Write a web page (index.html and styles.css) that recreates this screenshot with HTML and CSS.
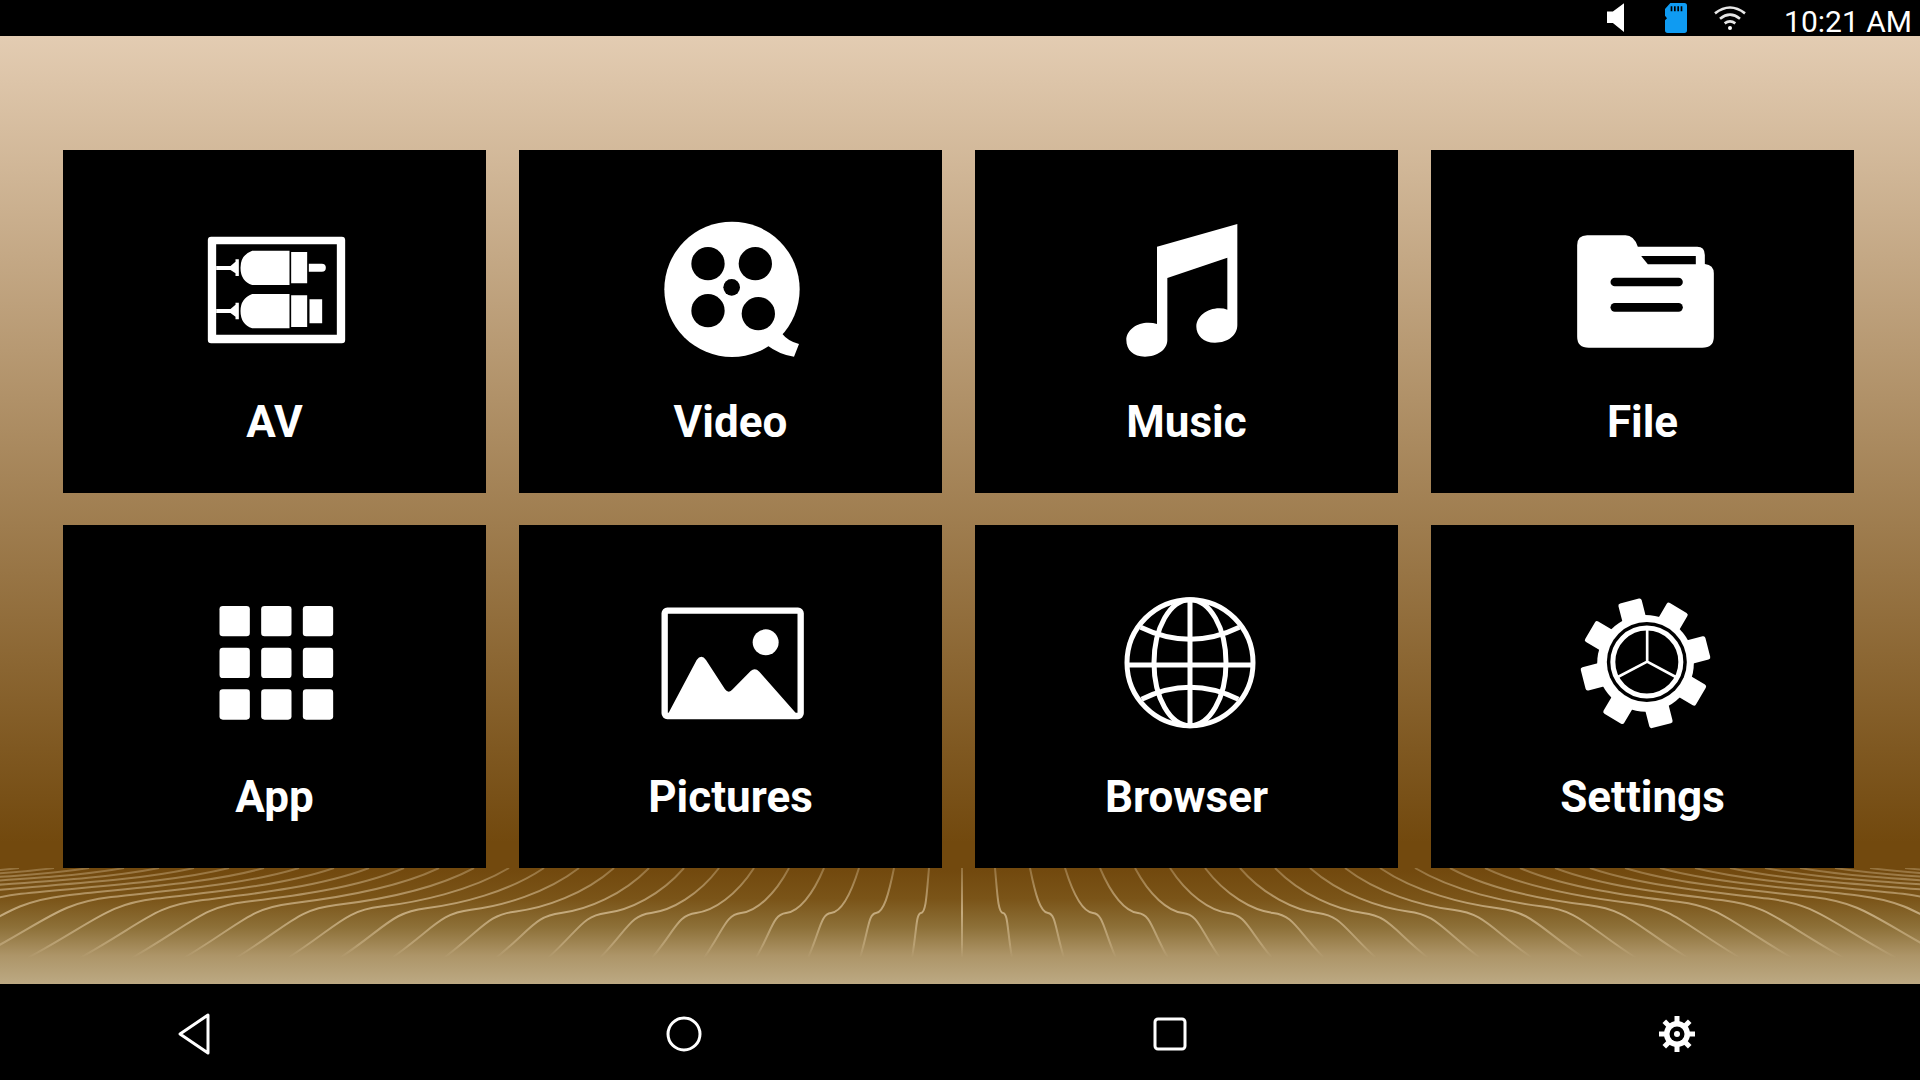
FILE: index.html
```html
<!DOCTYPE html>
<html>
<head>
    <title>Home</title>
    <link rel="stylesheet" href="styles.css">
</head>
<body>
    <div class="screen">
        <div class="statusbar">
            <svg class="st-speaker" viewBox="140 10 52 90"><path d="M140 35H158L192 10V98L158 70H140Z"/></svg>
            <svg class="st-sd" viewBox="314 10 66 90">
                <path class="sd-body" d="M330 10H372Q380 10 380 18V92Q380 100 372 100H322Q314 100 314 92V62L320 56L314 48V28Z"/>
                <path d="M331 20h5v15h-5zM341 20h5v15h-5zM351 20h5v15h-5zM361 20h5v15h-5z"/>
            </svg>
            <svg class="st-wifi" viewBox="460 18 100 72">
                <g class="wifi-arcs">
                    <path d="M465 40Q510 5 555 40"/>
                    <path d="M480 56Q510 32 540 56"/>
                    <path d="M494 70Q510 58 526 70"/>
                </g>
                <circle cx="510" cy="84" r="6"/>
            </svg>
            <span class="clock">10:21 AM</span>
        </div>

        <div class="desktop">
            <svg id="waves" class="waves" viewBox="0 0 1920 116">
                <defs>
                    <linearGradient id="waveFade" gradientUnits="userSpaceOnUse" x1="0" y1="0" x2="0" y2="90">
                        <stop offset="0" stop-color="#e8d2ac" stop-opacity="0.3"/>
                        <stop offset="0.5" stop-color="#e8d2ac" stop-opacity="0.65"/>
                        <stop offset="0.85" stop-color="#e8d2ac" stop-opacity="0.35"/>
                        <stop offset="1" stop-color="#e8d2ac" stop-opacity="0"/>
                    </linearGradient>
                </defs>
            </svg>

            <div class="grid">
                <div class="card">
                    <svg class="icon" viewBox="43.5 30 480 450">
                        <path fill-rule="evenodd" d="M92 110H484Q494 110 494 120V420Q494 430 484 430H92Q82 430 82 420V120Q82 110 92 110ZM107 133V404H469V133Z"/>
                        <path d="M107 198H150L165 185V220L150 210H107ZM165 178H175V228H165ZM327 152H215Q180 165 180 203Q180 243 215 255H327ZM332 156H380V250H332ZM385 191H424Q436 191 436 203Q436 215 424 215H385Z"/>
                        <path d="M107 327H150L165 314V350L150 339H107ZM165 308H175V358H165ZM327 282H215Q180 295 180 333Q180 373 215 385H327ZM332 286H380V381H332ZM387 298H425V370H387Z"/>
                    </svg>
                    <div class="label">AV</div>
                </div>
                <div class="card">
                    <svg class="icon" viewBox="33 30 480 450">
                        <path d="M380 435Q420 465 462 470L477 432Q445 425 425 400Z"/>
                        <circle cx="276" cy="268" r="203"/>
                        <g class="cut">
                            <circle cx="204" cy="191" r="50"/>
                            <circle cx="346" cy="191" r="50"/>
                            <circle cx="204" cy="332" r="50"/>
                            <circle cx="355" cy="341" r="50"/>
                            <circle cx="275" cy="262" r="25"/>
                        </g>
                    </svg>
                    <div class="label">Video</div>
                </div>
                <div class="card">
                    <svg class="icon" viewBox="21 30 480 450">
                        <path d="M171 140L412 72V375C412 405 385 428 345 428C310 428 289 405 289 380C289 350 320 325 358 325Q372 325 382 329V173L202 234V420C202 450 170 470 135 470C100 470 79 450 79 420C79 390 110 368 145 368Q160 368 171 372Z"/>
                    </svg>
                    <div class="label">Music</div>
                </div>
                <div class="card">
                    <svg class="icon" viewBox="37.5 0 480 450">
                        <path d="M110 76H225Q250 76 262 110H440Q463 110 463 135V162Q490 165 490 190V380Q490 413 455 413H115Q80 413 80 380V106Q80 76 110 76Z"/>
                        <g class="cut">
                            <path d="M272 138H436V163H292Z"/>
                            <rect x="180" y="203" width="217" height="26" rx="13"/>
                            <rect x="180" y="279" width="217" height="26" rx="13"/>
                        </g>
                    </svg>
                    <div class="label">File</div>
                </div>
                <div class="card">
                    <svg class="icon" viewBox="13.5 -15 480 450">
                        <rect x="87" y="48" width="91" height="91" rx="10"/>
                        <rect x="212" y="48" width="91" height="91" rx="10"/>
                        <rect x="337" y="48" width="91" height="91" rx="10"/>
                        <rect x="87" y="173" width="91" height="91" rx="10"/>
                        <rect x="212" y="173" width="91" height="91" rx="10"/>
                        <rect x="337" y="173" width="91" height="91" rx="10"/>
                        <rect x="87" y="298" width="91" height="91" rx="10"/>
                        <rect x="212" y="298" width="91" height="91" rx="10"/>
                        <rect x="337" y="298" width="91" height="91" rx="10"/>
                    </svg>
                    <div class="label">App</div>
                </div>
                <div class="card">
                    <svg class="icon" viewBox="33 -15 480 450">
                        <rect class="line" x="74" y="62" width="408" height="316" rx="8" stroke-width="19"/>
                        <circle cx="377" cy="157" r="39"/>
                        <path d="M84 372L170 210Q184 190 198 210L255 298Q266 312 278 298L332 243Q345 232 358 245L470 372Z"/>
                    </svg>
                    <div class="label">Pictures</div>
                </div>
                <div class="card">
                    <svg class="icon" viewBox="21 15 480 450">
                        <g class="line" stroke-width="15">
                            <circle cx="270" cy="248" r="189"/>
                            <ellipse cx="270" cy="248" rx="108" ry="189"/>
                            <path d="M270 60V436M82 255H458"/>
                            <path d="M122 142Q270 214 418 142"/>
                            <path d="M125 358Q270 286 415 358"/>
                        </g>
                    </svg>
                    <div class="label">Browser</div>
                </div>
                <div class="card">
                    <svg class="icon" viewBox="7.5 15 480 450">
                        <circle cx="255" cy="250" r="145"/>
                        <rect x="219" y="57" width="72" height="70" rx="7" transform="rotate(-14.4 255 250)"/>
                        <rect x="219" y="57" width="72" height="70" rx="7" transform="rotate(30.6 255 250)"/>
                        <rect x="219" y="57" width="72" height="70" rx="7" transform="rotate(75.6 255 250)"/>
                        <rect x="219" y="57" width="72" height="70" rx="7" transform="rotate(120.6 255 250)"/>
                        <rect x="219" y="57" width="72" height="70" rx="7" transform="rotate(165.6 255 250)"/>
                        <rect x="219" y="57" width="72" height="70" rx="7" transform="rotate(210.6 255 250)"/>
                        <rect x="219" y="57" width="72" height="70" rx="7" transform="rotate(255.6 255 250)"/>
                        <rect x="219" y="57" width="72" height="70" rx="7" transform="rotate(300.6 255 250)"/>
                        <g class="cut"><circle cx="259" cy="246" r="120"/></g>
                        <g class="line">
                            <circle cx="259" cy="246" r="102" stroke-width="15"/>
                            <path d="M260 245V150M260 245L172 291M260 245L346 291" stroke-width="8"/>
                        </g>
                    </svg>
                    <div class="label">Settings</div>
                </div>
            </div>
        </div>

        <div class="navbar">
            <svg class="nav-back" viewBox="0 0 32 42"><path class="line" stroke-width="3" stroke-linejoin="round" d="M30 2V40L2 21Z"/></svg>
            <svg class="nav-home" viewBox="0 0 36 36"><circle class="line" stroke-width="3" cx="18" cy="18" r="16"/></svg>
            <svg class="nav-recent" viewBox="0 0 34 34"><rect class="line" stroke-width="3" x="2" y="2" width="30" height="30" rx="3"/></svg>
            <svg class="nav-gear" viewBox="0 0 36 36">
                <circle cx="18" cy="18" r="13"/>
                <path d="M15.5 0h5v6h-5z"/>
                <path d="M15.5 0h5v6h-5z" transform="rotate(45 18 18)"/>
                <path d="M15.5 0h5v6h-5z" transform="rotate(90 18 18)"/>
                <path d="M15.5 0h5v6h-5z" transform="rotate(135 18 18)"/>
                <path d="M15.5 0h5v6h-5z" transform="rotate(180 18 18)"/>
                <path d="M15.5 0h5v6h-5z" transform="rotate(225 18 18)"/>
                <path d="M15.5 0h5v6h-5z" transform="rotate(270 18 18)"/>
                <path d="M15.5 0h5v6h-5z" transform="rotate(315 18 18)"/>
                <g class="cut"><circle cx="18" cy="18" r="7.5"/></g>
                <circle cx="18" cy="18" r="3"/>
            </svg>
        </div>
    </div>

    <script>
        // sand ripples along the bottom of the wallpaper
        const waves = document.getElementById('waves');
        const centerX = 962;

        function addWave(d) {
            const path = document.createElementNS('http://www.w3.org/2000/svg', 'path');
            path.setAttribute('d', d);
            path.setAttribute('class', 'wave');
            waves.appendChild(path);
        }

        function wavePath(side, n) {
            const top = 33 + n * 35;
            const mid = 41 + n * 45;
            const bottom = 50 + n * 52;
            const midY = 45 - Math.max(0, n - 8) * 1.6;
            const k = 5 + n * 2.6;
            const x = offset => centerX + side * offset;

            return 'M' + x(top) + ' 0' +
                'C' + x(top + (mid - top) * 0.3) + ' ' + midY * 0.6 + ' ' +
                x(mid - k) + ' ' + (midY - k * 0.12) + ' ' + x(mid) + ' ' + midY +
                'C' + x(mid + k) + ' ' + (midY + k * 0.12) + ' ' +
                x(bottom - (bottom - mid) * 0.55) + ' ' + (midY + (90 - midY) * 0.35) + ' ' +
                x(bottom) + ' 90';
        }

        addWave('M962 0V90');
        [-1, 1].forEach(side => {
            for (let n = 0; n < 32; n++) {
                addWave(wavePath(side, n));
            }
        });
    </script>
</body>
</html>
```

FILE: styles.css
```css
* {
    box-sizing: border-box;
}
body {
    margin: 0;
    background-color: #000;
    font-family: Roboto, "Liberation Sans", sans-serif;
    color: #fff;
}
svg {
    display: block;
    fill: #fff;
}
.screen {
    display: flex;
    flex-direction: column;
    width: 1920px;
    height: 1080px;
    overflow: hidden;
}

/* status bar */
.statusbar {
    display: flex;
    align-items: center;
    justify-content: flex-end;
    height: 36px;
    padding-right: 8px;
    background-color: #000;
}
.st-speaker {
    width: 17px;
    height: 30px;
    margin-right: 41px;
}
.st-sd {
    width: 22px;
    height: 30px;
    margin-right: 26px;
}
.st-sd path {
    fill: #000;
}
.st-sd .sd-body {
    fill: #0f9bf2;
}
.st-wifi {
    width: 34px;
    height: 24px;
    margin-right: 37px;
}
.wifi-arcs {
    fill: none;
    stroke: #e6e6e6;
    stroke-width: 8;
}
.clock {
    font-size: 30px;
    line-height: 36px;
    padding-top: 8px;
    white-space: nowrap;
}

/* wallpaper + tiles */
.desktop {
    position: relative;
    flex: 1;
    padding: 114px 66px 0 63px;
    background: linear-gradient(180deg, #e3ccb2 0%, #72490e 85%, #72490e 88%, #7a5418 91%, #8d7038 94%, #ad9568 97%, #bca983 100%);
}
.waves {
    position: absolute;
    left: 0;
    bottom: 0;
    width: 1920px;
    height: 116px;
    filter: blur(0.5px);
}
.wave {
    fill: none;
    stroke: url(#waveFade);
    stroke-width: 2;
}
.grid {
    position: relative;
    display: grid;
    grid-template-columns: repeat(4, 1fr);
    grid-auto-rows: 343px;
    column-gap: 33px;
    row-gap: 32px;
}
.card {
    display: flex;
    flex-direction: column;
    align-items: center;
    padding-top: 60px;
    background-color: #000;
}
.icon {
    width: 160px;
    height: 150px;
}
.cut {
    fill: #000;
}
.line {
    fill: none;
    stroke: #fff;
}
.label {
    margin-top: 37px;
    font-size: 44px;
    font-weight: 700;
    line-height: 50px;
    text-align: center;
}

/* navigation bar */
.navbar {
    display: flex;
    align-items: center;
    height: 96px;
    padding-top: 4px;
    padding-left: 178px;
    background-color: #000;
}
.nav-back {
    width: 32px;
    height: 42px;
    margin-right: 456px;
}
.nav-home {
    width: 36px;
    height: 36px;
    margin-right: 451px;
}
.nav-recent {
    width: 34px;
    height: 34px;
    margin-right: 472px;
}
.nav-gear {
    width: 36px;
    height: 36px;
}
```
